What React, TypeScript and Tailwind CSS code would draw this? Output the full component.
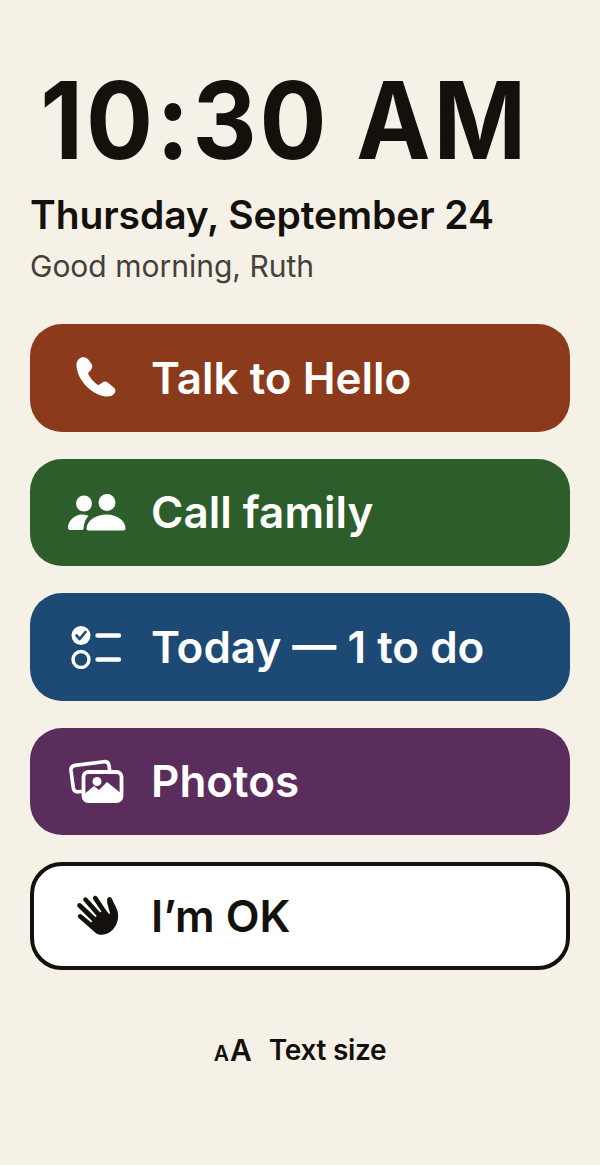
import React from 'react';

const PhoneIcon = () => (
  <svg viewBox="0 0 44 44" className="w-[48px] h-[48px]" fill="#fff">
    <path d="M9.500 3c-3 .6-5.300 3.200-5.400 6.500-.1 5.800 2.500 12.800 7.700 18.600 5.500 6 12.200 9.800 19 10.800 3.800.5 6.800-.8 8.300-3.200 1.200-1.900.9-3.800-.8-5.100l-5.600-4.400c-1.500-1.200-3.300-1.200-4.900-.1l-2.400 1.800c-.8.600-1.600.5-2.400 0-2.800-1.900-6.300-5.800-7.900-9.100-.4-.9-.3-1.600.4-2.300l2-2.100c1.300-1.400 1.500-3.200.6-4.900L15.300 5.600C14 3.500 11.900 2.600 9.500 3z" />
  </svg>
);

const FamilyIcon = () => (
  <svg viewBox="0 0 60 40" className="w-[60px] h-10" fill="#fff">
    <circle cx="18" cy="11.500" r="8" />
    <circle cx="41" cy="10.500" r="8.500" />
    <path d="M2 36c-.3-7 6.500-13.500 14-13.500 2.500 0 4.800.5 6.500 1.500-2.800 2.800-4.500 6.500-5 12.500-.1.800-.6 1.500-1.500 1.500H4c-1.200 0-2-.8-2-2z" />
    <path d="M20.500 36.500c0-7.500 9-14 20-14s19 6.500 19 14c0 1.200-.8 2-2 2h-35c-1.200 0-2-.8-2-2z" />
  </svg>
);

const ChecklistIcon = () => (
  <svg viewBox="0 0 52 44" className="w-[52px] h-11" fill="none">
    <circle cx="11" cy="10.500" r="9.500" fill="#fff" />
    <path d="M6.500 10.500l3.200 3.500 5.800-7" stroke="#1c4a75" strokeWidth="2.600" strokeLinecap="round" strokeLinejoin="round" />
    <circle cx="11" cy="34.500" r="8" stroke="#fff" strokeWidth="3.400" />
    <path d="M27.500 10.500h21.500M27.500 34.500h21.500" stroke="#fff" strokeWidth="4.400" strokeLinecap="round" />
  </svg>
);

const PhotosIcon = () => (
  <svg viewBox="0 0 56 46" className="w-14 h-[46px]" fill="none">
    <path d="M13 33.500 10.500 33.800C7.500 34.100 5.800 32.600 5.300 30L3 12.500C2.700 9.700 4.200 7.800 7 7.400L36 3.700c2.800-.3 4.600 1.100 5 3.800l.6 4.500" stroke="#fff" strokeWidth="3.600" strokeLinecap="round" />
    <rect x="15.500" y="14" width="38" height="29" rx="5" stroke="#fff" strokeWidth="3.800" />
    <circle cx="29" cy="23.500" r="4.500" fill="#fff" />
    <path d="M17 41v-5.500l9-7.500 5 4 8-8 13 10.500V41c0 1-.7 1.500-1.500 1.500h-32C17.700 42.500 17 42 17 41z" fill="#fff" />
  </svg>
);

const WaveIcon = () => (
  <svg viewBox="0 0 44 44" className="w-[46px] h-[46px]" fill="#14110d">
    <path d="M33 4c1.800-.5 3.200.6 3.800 2.600 1.200 3.500 4 6.700 5 11.400 1.300 6-.4 12.700-5 17.500-4.500 4.600-11 5.700-15.800 3L4.500 24c-1-.9-1.100-2.300-.2-3.200.9-.9 2.200-.9 3.200-.1l9 7.400 1-1L3.700 13.500c-.9-.9-.9-2.300 0-3.200.9-.9 2.300-.9 3.200 0L20.500 23l1.200-1.100L9.300 7.700c-.8-1-.7-2.300.3-3.100 1-.8 2.300-.6 3.100.4L25 18.700l1.200-.9-7.700-11.700c-.7-1.100-.5-2.400.5-3.100 1-.7 2.400-.4 3.100.7l8.800 13 2.300 3c.5.700 1.300.3 1.200-.5-.4-2.500-1.600-5-2.200-8C31.500 8.500 31.200 4.600 33 4z" />
  </svg>
);

const rows = [
  { label: 'Talk to Hello', icon: PhoneIcon, bg: 'bg-[#8b3a1c]' },
  { label: 'Call family', icon: FamilyIcon, bg: 'bg-[#2d5d2a]' },
  { label: 'Today — 1 to do', icon: ChecklistIcon, bg: 'bg-[#1c4a75]' },
  { label: 'Photos', icon: PhotosIcon, bg: 'bg-[#5a2d5c]' },
];

const App = () => {
  return (
    <div className="w-[600px] h-[1165px] bg-[#f6f1e7] text-[#14110d] font-['Inter',sans-serif] px-[30px] pt-[62px] overflow-hidden">
      <h1 className="text-[107px] leading-[116px] font-bold tracking-[3.200px] pl-[11px] whitespace-nowrap origin-left scale-x-[0.93]">10:30 AM</h1>
      <p className="mt-[13px] text-[39px] leading-[48px] font-semibold tracking-[-0.100px]">Thursday, September 24</p>
      <p className="mt-[8px] text-[30px] leading-[38px] text-[#44403a]">Good morning, Ruth</p>

      <div className="mt-[39px] flex flex-col gap-[27px]">
        {rows.map((item) => (
          <button key={item.label} className={`${item.bg} h-[107.500px] rounded-[32px] flex items-center text-white`}>
            <span className="w-[122px] flex justify-center pl-[10px] shrink-0">
              <item.icon />
            </span>
            <span className="text-[44px] font-semibold -ml-[1px]">{item.label}</span>
          </button>
        ))}
        <button className="h-[107.500px] rounded-[32px] flex items-center bg-white border-4 border-[#14110d]">
          <span className="w-[118px] flex justify-center pl-[8px] shrink-0">
            <WaveIcon />
          </span>
          <span className="text-[44px] font-semibold -ml-[1px]">I’m OK</span>
        </button>
      </div>

      <div className="mt-[62px] flex items-center justify-center gap-[17px]">
        <span className="flex items-baseline font-semibold gap-[1px]">
          <span className="text-[21px] leading-none">A</span>
          <span className="text-[30px] leading-none">A</span>
        </span>
        <span className="text-[28px] leading-[36px] font-semibold tracking-[-0.300px]">Text size</span>
      </div>
    </div>
  );
};

export default App;
